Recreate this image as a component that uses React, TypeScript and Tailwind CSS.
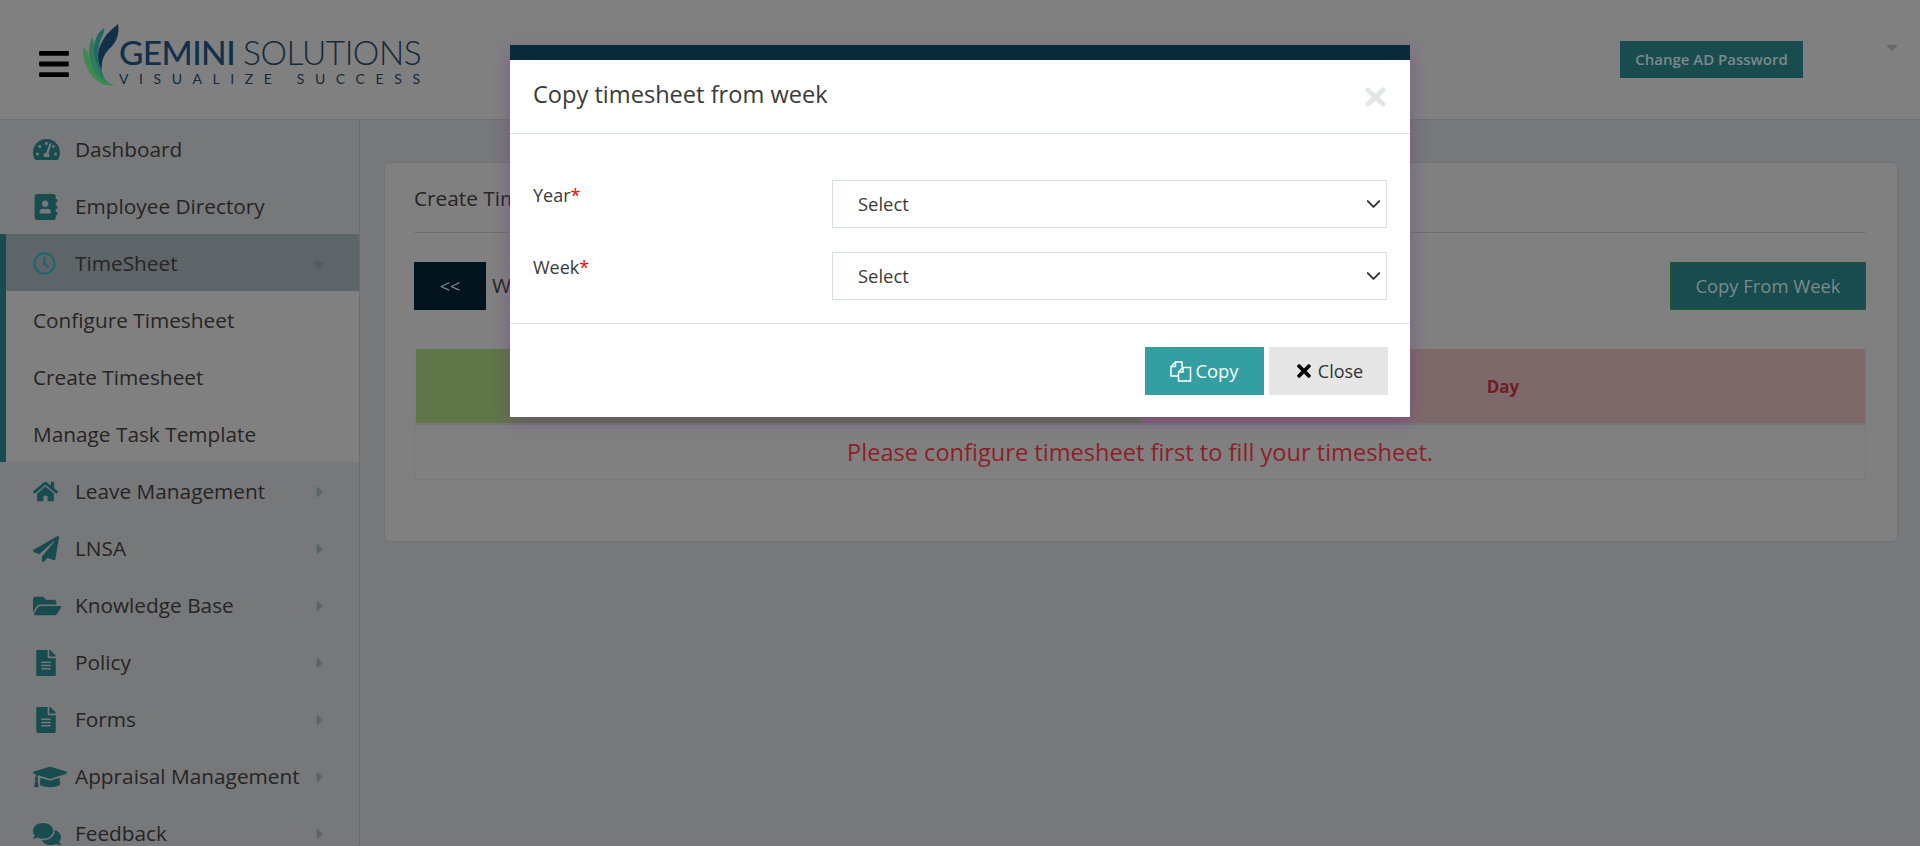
import React from "react";
import {
  FaTachometerAlt, FaAddressBook, FaRegClock, FaHome, FaPaperPlane, FaFolderOpen,
  FaFileAlt, FaGraduationCap, FaComments, FaBars, FaTimes, FaCaretRight, FaCaretDown,
} from "react-icons/fa";
import { ChevronDown } from "lucide-react";

const items = [
  { label: "Leave Management", Icon: FaHome, size: 25 },
  { label: "LNSA", Icon: FaPaperPlane, size: 26 },
  { label: "Knowledge Base", Icon: FaFolderOpen, size: 28 },
  { label: "Policy", Icon: FaFileAlt, size: 26 },
  { label: "Forms", Icon: FaFileAlt, size: 26 },
  { label: "Appraisal Management", Icon: FaGraduationCap, size: 34 },
  { label: "Feedback", Icon: FaComments, size: 28 },
];

function Logo() {
  return (
    <div className="flex items-start ml-[9px]">
      <svg width="42" height="70" viewBox="0 0 42 70" className="mt-[20px] shrink-0">
        <path d="M3 27C2 40 8 56 22 64C26 66 31 66 36 65C24 64 12 52 9 36C8 32 6 29 3 27Z" fill="#3f8a50" />
        <path d="M12 17C9 24 8 34 11 44C14 54 22 62 30 64C20 55 14 42 14 30C14 25 14 21 12 17Z" fill="#2f7d5a" />
        <path d="M24 8C18 12 14 20 14 30C14 40 18 50 24 58C18 42 17 30 20 22C22 16 25 12 24 8Z" fill="#1e6a66" />
        <path d="M38 4C40 14 36 24 28 30C24 35 21 41 22 50C17 42 17 30 22 22C26 14 32 9 38 4Z" fill="#12304a" />
      </svg>
      <div className="ml-[-3px] mt-[35px] font-['Lato',sans-serif] text-[#12304a]">
        <div className="flex items-center h-[36px] leading-none">
          <span className="text-[33.5px] font-medium tracking-[-0.6px]">GEMINI</span>
          <span className="text-[33.5px] font-light tracking-[-0.5px] ml-[8px] text-[#15293a]">SOLUTIONS</span>
        </div>
        <div className="text-[14px] leading-none mt-[1px] tracking-[10.6px] whitespace-pre text-[#15293a]">VISUALIZE SUCCESS</div>
      </div>
    </div>
  );
}

function Row({ label, Icon, size }: { label: string; Icon: React.ComponentType<{ size?: number; className?: string }>; size: number }) {
  return (
    <div className="h-[57px] pt-[2px] flex items-center pl-[33px] pr-[30px] relative">
      <span className="w-[42px] flex items-center">
        <Icon size={size} className="text-[#184c4e]" />
      </span>
      <span className="flex-1 whitespace-nowrap">{label}</span>
      <FaCaretRight size={18} className="text-[#5c6668]" />
    </div>
  );
}

function Select() {
  return (
    <div className="relative">
      <select className="appearance-none h-[48px] w-full bg-white border border-[#d5e0e6] pl-[25px] text-[18.4px]"><option>Select</option></select>
      <ChevronDown size={23} strokeWidth={2} className="absolute right-[2px] top-1/2 -translate-y-1/2 text-[#333]" />
    </div>
  );
}

export default function App() {
  return (
    <div className="relative w-full h-[846px] overflow-hidden bg-[#76787a] font-['Open_Sans',sans-serif] text-[#272424]">
      <header className="h-[120px] bg-[#808080] border-b border-[#6f7274] flex items-start relative">
        <div className="ml-[37px] mt-[47px] text-black"><FaBars size={34} /></div>
        <Logo />
        <button className="absolute left-[1620px] top-[41px] w-[183px] h-[37px] bg-[#184c4e] text-[#7b8a8b] text-[15px] font-semibold">Change AD Password</button>
        <FaCaretDown size={18} className="absolute left-[1883px] top-[38px] text-[#65686a]" />
      </header>

      <div className="flex h-[726px]">
        <aside className="w-[360px] shrink-0 border-r border-[#6a6d6f] text-[20.8px] overflow-hidden">
          <div className="h-[57px] pt-[2px] flex items-center pl-[33px]">
            <span className="w-[42px]"><FaTachometerAlt size={27} className="text-[#184c4e]" /></span>Dashboard
          </div>
          <div className="h-[57px] pt-[2px] flex items-center pl-[33px]">
            <span className="w-[42px]"><FaAddressBook size={26} className="text-[#184c4e]" /></span>Employee Directory
          </div>
          <div className="border-l-[6px] border-[#184c4e]">
            <div className="h-[57px] pt-[2px] flex items-center pl-[27px] pr-[30px] bg-[#5e6568]">
              <span className="w-[42px]"><FaRegClock size={23} className="text-[#1f6669]" /></span>
              <span className="flex-1">TimeSheet</span>
              <FaCaretDown size={20} className="text-[#555c5f]" />
            </div>
            <div className="bg-[#808080]">
              <div className="h-[57px] pt-[2px] flex items-center pl-[27px]">Configure Timesheet</div>
              <div className="h-[57px] pt-[2px] flex items-center pl-[27px]">Create Timesheet</div>
              <div className="h-[57px] pt-[2px] flex items-center pl-[27px]">Manage Task Template</div>
            </div>
          </div>
          {items.map((it) => <Row key={it.label} {...it} />)}
        </aside>

        <main className="flex-1 pl-[24px] pr-[22px] pt-[42px]">
          <div className="h-[380px] bg-[#808080] border border-[#6f7274] rounded-[6px] pl-[29px] pr-[31px]">
            <div className="h-[70px] pt-[3px] border-b border-[#6d7072] flex items-center text-[20.8px]">Create Timesheet</div>
            <div className="mt-[29px] h-[48px] flex items-center">
              <button className="w-[72px] h-[48px] bg-[#03141e] text-[#7f8b90] text-[18px]">&lt;&lt;</button>
              <span className="ml-[6px] text-[20.8px]">Week</span>
              <button className="ml-auto w-[196px] h-[48px] bg-[#184c4e] border border-[#1d5a2c] text-[#7b8a8b] text-[18.4px]">Copy From Week</button>
            </div>
            <div className="mt-[39px] border-x border-b border-[#767a7c] h-[131px]">
              <div className="flex h-[74px]">
                <div className="w-[725px] ml-[1px] bg-[#5f7648]" />
                <div className="flex-1 bg-[#7d696a] pt-[2px] flex items-center justify-center text-[17px] font-bold text-[#701d24]">Day</div>
              </div>
              <div className="h-[2px] bg-[#75777a]" />
              <div className="h-[54px] pt-[2px] flex items-center justify-center text-[23.6px] text-[#8e1f28]">Please configure timesheet first to fill your timesheet.</div>
            </div>
          </div>
        </main>
      </div>

      <div className="absolute left-1/2 -translate-x-1/2 top-[45px] w-[900px] bg-white border-t-[15px] border-[#0a2a3c] shadow-[0_5px_15px_rgba(120,40,150,0.4)] text-[#3a3a3a]">
        <div className="h-[74px] border-b border-[#d9e4e8] pl-[23px] pr-[24px] flex items-center justify-between">
          <span className="text-[23.6px] mt-[-4px]">Copy timesheet from week</span>
          <svg width="21" height="20" viewBox="0 0 21 20"><path d="M3 3L18 17M18 3L3 17" stroke="#e3e5e8" strokeWidth="5" strokeLinecap="round" /></svg>
        </div>
        <div className="pl-[23px] pr-[23px] pt-[46px] pb-[23px] border-b border-[#d9e4e8] grid grid-cols-[299px_1fr] gap-y-[24px] text-[18px]">
          <label className="leading-[24px] pt-[3px]">Year<span className="text-[#ff0000]">*</span></label>
          <Select />
          <label className="leading-[24px] pt-[3px]">Week<span className="text-[#ff0000]">*</span></label>
          <Select />
        </div>
        <div className="h-[93px] flex justify-end gap-[5px] pt-[23px] pr-[22px] text-[18.4px]">
          <button className="w-[119px] h-[48px] bg-[#339fa3] text-white flex items-center justify-center gap-[3px]">
            <svg width="22" height="21" viewBox="0 0 22 21" fill="none" stroke="white" strokeWidth="1.5">
              <path d="M9 1H5.5L1 5.5V15H8.5M5.5 1V5.5H1M9 1H12V6.5" />
              <path d="M13 6.5H20.5V20H8.5V11ZM13 6.5V11H8.5" />
            </svg>
            Copy
          </button>
          <button className="w-[119px] h-[48px] bg-[#e5e5e5] text-[#333] text-[18px] flex items-center justify-center gap-[4px]"><FaTimes size={20} className="text-black" />Close</button>
        </div>
      </div>
    </div>
  );
}
